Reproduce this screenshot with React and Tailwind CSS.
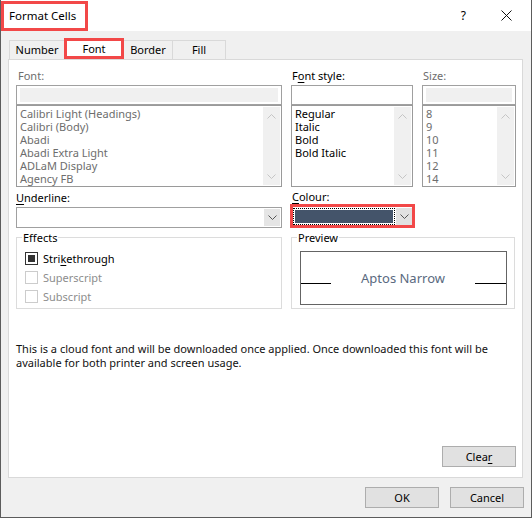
import React from "react";

const U = ({ children }) => (
  <span className="underline underline-offset-[2px] decoration-[1px]">{children}</span>
);

function Chevron({ dir = "down", color = "#606060" }) {
  return (
    <svg width="9" height="5" viewBox="0 0 9 5" className="block">
      <polyline
        points={dir === "down" ? "0.5,0.5 4.5,4.5 8.5,0.5" : "0.5,4.5 4.5,0.5 8.5,4.5"}
        fill="none"
        stroke={color}
        strokeWidth="1"
      />
    </svg>
  );
}

function ListBox({ items, gray }) {
  return (
    <div className="h-[82px] border border-[#9a9a9a] bg-white flex overflow-hidden">
      <div className={`flex-1 pl-[3px] pt-[1px] leading-[13px] ${gray ? "text-[#6d6d6d]" : "text-black"}`}>
        {items.map((i) => (
          <div key={i} className="h-[13px] whitespace-nowrap">
            {i}
          </div>
        ))}
      </div>
      <div className="w-[17px] my-[1px] mr-[1px] bg-[#f0f0f0] flex flex-col items-center justify-between pt-[7px] pb-[6px]">
        <Chevron dir="up" color="#c5c5c5" />
        <Chevron dir="down" color="#c5c5c5" />
      </div>
    </div>
  );
}

function Check({ checked, disabled, children }) {
  return (
    <div className="h-[19px] flex items-center pl-[8px]">
      <div
        className={`w-[13px] h-[13px] border flex items-center justify-center bg-white ${
          disabled ? "border-[#cccccc]" : "border-[#333333]"
        }`}
      >
        {checked && <div className="w-[7px] h-[7px] bg-[#333333]" />}
      </div>
      <span className={`ml-[5px] ${disabled ? "text-[#8d8d8d]" : "text-black"}`}>{children}</span>
    </div>
  );
}

export default function App() {
  return (
    <div className="w-[532px] h-[518px] bg-[#f0f0f0] border-x border-b border-[#5c5c5c] flex flex-col font-['Noto_Sans',sans-serif] text-[11px] text-black overflow-hidden leading-[16px]">
      {/* Title bar */}
      <div className="h-[31px] bg-white flex items-start shrink-0">
        <div className="relative z-10 mt-[1px] h-[30px] w-[87px] border-[3px] border-[#f24848] flex items-center pl-[5px] text-[11.5px] whitespace-nowrap">
          Format Cells
        </div>
        <div className="flex-1" />
        <div className="h-[31px] flex items-center mr-[35px] text-[12px]">?</div>
        <div className="h-[31px] flex items-center mr-[19px]">
          <svg width="11" height="11" viewBox="0 0 11 11" className="block">
            <path d="M0.5 0.5 L10.5 10.5 M10.5 0.5 L0.5 10.5" stroke="#111" strokeWidth="1" />
          </svg>
        </div>
      </div>

      {/* Tabs */}
      <div className="h-[28px] flex items-end pl-[8px] shrink-0">
        <div className="w-[55px] h-[19px] border-t border-l border-[#d9d9d9] flex items-center justify-center">
          Number
        </div>
        <div className="relative z-10 w-[60px] h-[21px] bg-white border-[3px] border-[#f24848] flex items-center justify-center">
          Font
        </div>
        <div className="w-[49px] h-[19px] border-t border-r border-[#d9d9d9] flex items-center justify-center">
          Border
        </div>
        <div className="w-[53px] h-[19px] border-t border-r border-[#d9d9d9] flex items-center justify-center">
          Fill
        </div>
      </div>

      {/* Panel */}
      <div className="ml-[7px] w-[515px] h-[419px] border border-[#d9d9d9] bg-white flex flex-col pl-[7px] pr-[5px] pt-[8px] shrink-0">
        {/* Row 1: font / style / size */}
        <div className="flex gap-[9px]">
          <div className="w-[266px]">
            <div className="h-[16px] pl-[2px] text-[#6d6d6d]">Font:</div>
            <div className="mt-[1px] h-[20px] border border-[#a0a0a0] bg-white p-[2px] pl-[3px] pr-[3px]">
              <div className="w-full h-full bg-[#f0f0f0]" />
            </div>
            <ListBox
              gray
              items={[
                "Calibri Light (Headings)",
                "Calibri (Body)",
                "Abadi",
                "Abadi Extra Light",
                "ADLaM Display",
                "Agency FB",
              ]}
            />
          </div>
          <div className="w-[122px]">
            <div className="h-[16px] pl-[1px]">
              F<U>o</U>nt style:
            </div>
            <div className="mt-[1px] h-[20px] border border-[#a0a0a0] bg-white" />
            <ListBox items={["Regular", "Italic", "Bold", "Bold Italic"]} />
          </div>
          <div className="w-[94px]">
            <div className="h-[16px] pl-[1px] text-[#6d6d6d]">Size:</div>
            <div className="mt-[1px] h-[20px] border border-[#a0a0a0] bg-white p-[2px] pl-[3px] pr-[3px]">
              <div className="w-full h-full bg-[#f0f0f0]" />
            </div>
            <ListBox gray items={["8", "9", "10", "11", "12", "14"]} />
          </div>
        </div>

        {/* Row 2: underline / colour */}
        <div className="flex gap-[9px] mt-[3px]">
          <div className="w-[266px]">
            <div className="h-[16px]">
              <U>U</U>nderline:
            </div>
            <div className="mt-[1px] h-[21px] border border-[#a0a0a0] bg-white flex justify-end p-[1px]">
              <div className="w-[16px] h-full bg-[#e5e5e5] flex items-center justify-center">
                <Chevron color="#555" />
              </div>
            </div>
          </div>
          <div className="w-[125px] -ml-[1px]">
            <div className="h-[14px] leading-[14px] pl-[2px]">
              <U>C</U>olour:
            </div>
            <div className="h-[24px] border-[3px] border-[#f24848] bg-white flex">
              <div className="w-[102px] h-[17px] mt-[1px] border border-dotted border-black p-[1px]">
                <div className="w-full h-full bg-[#44546a]" />
              </div>
              <div className="ml-[1px] mt-[1px] w-[16px] h-[17px] bg-[#e1e1e1] flex items-center justify-center">
                <Chevron color="#555" />
              </div>
            </div>
          </div>
        </div>

        {/* Row 3: effects / preview */}
        <div className="flex gap-[9px] mt-[9px]">
          <div className="w-[266px] h-[72px] border border-[#dcdcdc]">
            <div className="-mt-[8px] ml-[5px] w-fit px-[1px] bg-white h-[16px]">Effects</div>
            <div className="mt-[3px]">
              <Check checked>
                Stri<U>k</U>ethrough
              </Check>
              <Check disabled>Superscript</Check>
              <Check disabled>Subscript</Check>
            </div>
          </div>
          <div className="w-[224px] h-[72px] border border-[#dcdcdc]">
            <div className="-mt-[8px] ml-[5px] w-fit px-[1px] bg-white h-[16px]">Preview</div>
            <div className="mt-[5px] ml-[8px] w-[207px] h-[54px] border border-[#646464] flex items-center justify-between">
              <div className="w-[30px] h-[1px] bg-black mt-[11px]" />
              <div className="text-[13px] text-[#5a6a80]">Aptos Narrow</div>
              <div className="w-[31px] h-[1px] bg-black mt-[11px]" />
            </div>
          </div>
        </div>

        {/* Cloud font note */}
        <div className="mt-[33px] leading-[14px] text-[#111]">
          <div className="whitespace-nowrap">
            This is a cloud font and will be downloaded once applied. Once downloaded this font will be
          </div>
          <div className="whitespace-nowrap">available for both printer and screen usage.</div>
        </div>

        <div className="mt-auto mb-[10px] flex justify-end">
          <button className="w-[74px] h-[21px] border border-[#adadad] bg-[#e1e1e1] flex items-center justify-center mr-[1px]">
            Clea<U>r</U>
          </button>
        </div>
      </div>

      {/* Bottom buttons */}
      <div className="mt-[9px] flex justify-end pr-[7px] gap-[11px]">
        <button className="w-[74px] h-[21px] border border-[#adadad] bg-[#e1e1e1] flex items-center justify-center">
          OK
        </button>
        <button className="w-[74px] h-[21px] border border-[#adadad] bg-[#e1e1e1] flex items-center justify-center">
          Cancel
        </button>
      </div>
    </div>
  );
}
